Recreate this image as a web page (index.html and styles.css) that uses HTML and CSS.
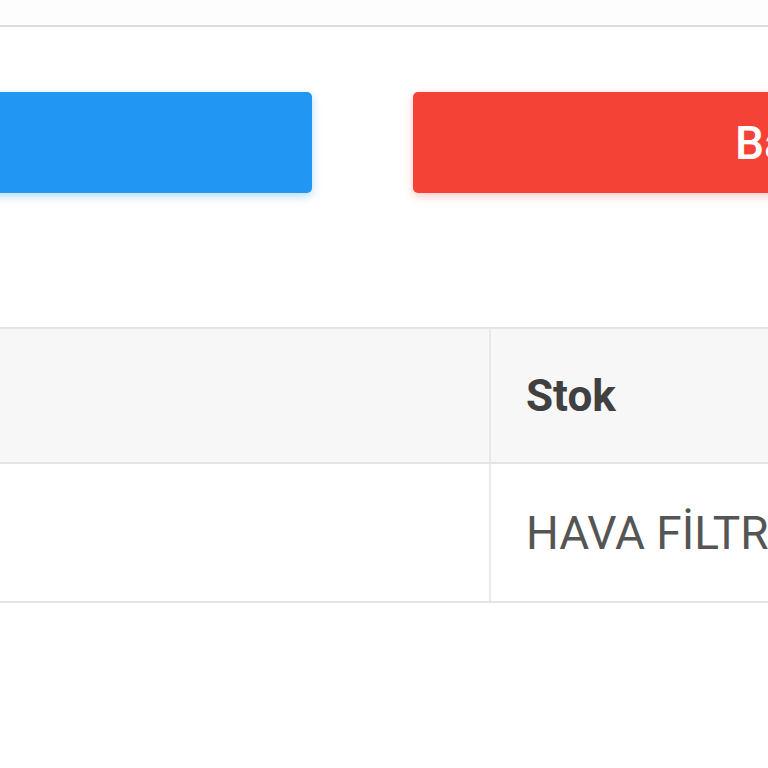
FILE: index.html
```html
<!DOCTYPE html>
<html lang="tr">
<head>
<meta charset="utf-8">
<link rel="stylesheet" href="styles.css">
</head>
<body>
<div class="page">
  <div class="topbar"></div>
  <div class="actions">
    <button class="btn btn-blue" type="button"></button>
    <button class="btn btn-red" type="button">Barkod Yazdır</button>
  </div>
  <table class="grid">
    <thead>
      <tr><th class="c1"></th><th class="c2">Stok</th></tr>
    </thead>
    <tbody>
      <tr><td class="c1"></td><td class="c2">HAVA FİLTRESİ</td></tr>
    </tbody>
  </table>
</div>
</body>
</html>
```
FILE: styles.css
```css
html, body {
  margin: 0;
  padding: 0;
  background: #fff;
  overflow: hidden;
  width: 768px;
  height: 768px;
}
.page {
  width: 1600px;
  margin-left: -400px;
  font-family: Roboto, "Liberation Sans", sans-serif;
}
.topbar {
  height: 25px;
  background: #fdfdfd;
  border-bottom: 2px solid #dcdcdc;
}
.actions {
  display: flex;
  gap: 101px;
  padding-top: 65px;
  height: 101px;
}
.btn {
  flex: 0 0 auto;
  border: none;
  border-radius: 5px;
  height: 101px;
  font-family: Roboto, "Liberation Sans", sans-serif;
  font-weight: 500;
  font-size: 46px;
  color: #fff;
  padding: 0;
}
.btn-blue {
  width: 712px;
  background: #2196f3;
  box-shadow: 0 3px 10px rgba(33,150,243,0.35);
}
.btn-red {
  width: 700px;
  background: #f44336;
  box-shadow: 0 3px 10px rgba(244,67,54,0.3);
  text-align: left;
  padding-left: 322px;
}
.grid {
  margin-top: 134px;
  border-collapse: collapse;
  width: 1600px;
}
.grid th, .grid td {
  border-top: 2px solid #e4e4e4;
  border-bottom: 2px solid #e4e4e4;
  text-align: left;
  padding: 0 0 0 35px;
}
.grid .c1 {
  width: 854px;
  border-right: 2px solid #e8e8e8;
}
.grid th {
  background: #f7f7f7;
  height: 133px;
  font-weight: 700;
  font-size: 44px;
  color: #404040;
}
.grid td {
  height: 137px;
  font-size: 46px;
  color: #555;
  white-space: nowrap;
}
```
